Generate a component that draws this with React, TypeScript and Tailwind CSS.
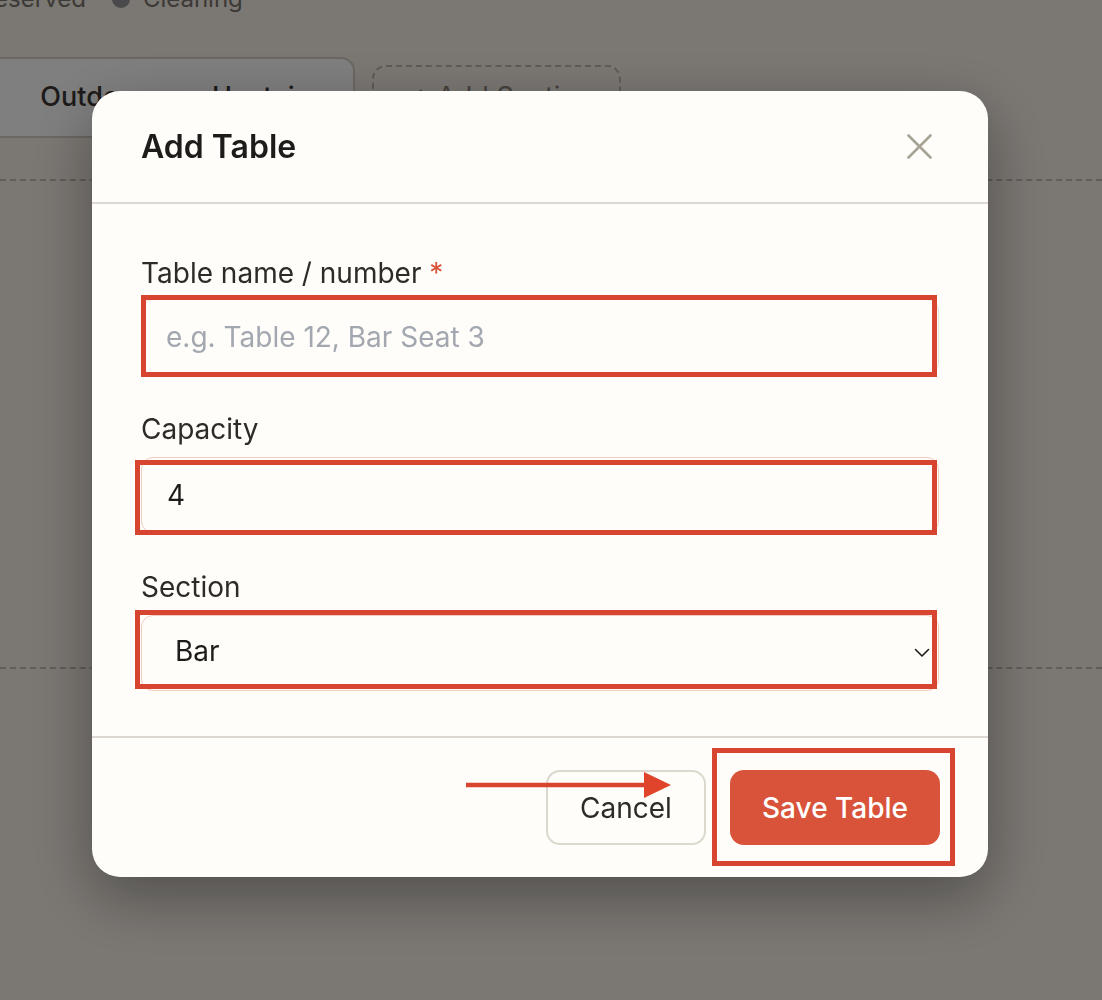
import { useState } from 'react'

function CloseIcon() {
  return (
    <svg width="25" height="25" viewBox="0 0 25 25" fill="none" stroke="#a7a397" strokeWidth="2.6" strokeLinecap="round">
      <path d="M1.5 1.5 L23.5 23.5 M23.5 1.5 L1.5 23.5" />
    </svg>
  )
}

function Chevron() {
  return (
    <svg width="16" height="10" viewBox="0 0 16 10" fill="none" stroke="#1d1c1a" strokeWidth="1.6" strokeLinecap="round" strokeLinejoin="round">
      <path d="M1.5 1.5 L8 8 L14.5 1.5" />
    </svg>
  )
}

export default function App() {
  const [name, setName] = useState('')
  const [capacity, setCapacity] = useState('4')
  const [section, setSection] = useState('Bar')

  return (
    <div className="relative min-h-screen overflow-hidden bg-[#f6efe7] font-['Inter',sans-serif]">
      {/* Page behind the dialog */}
      <div className="-mt-[19px] ml-[-52px] flex h-[36px] items-center text-[24px] text-[#78736d]">
        <span className="h-[18px] w-[18px] rounded-full bg-[#d9533a]" />
        <span className="ml-[13px]">Reserved</span>
        <span className="ml-[26px] h-[18px] w-[18px] rounded-full bg-[#94949a]" />
        <span className="ml-[13px]">Cleaning</span>
      </div>

      <div className="mt-[40px] flex items-center gap-[17px]">
        <div className="ml-[-144px] flex h-[81px] items-center rounded-[14px] border-2 border-[#d6cfc4] bg-white text-[27px] font-medium text-[#3a3733]">
          <span className="px-[33px]">Indoor</span>
          <span className="px-[33px]">Outdoor</span>
          <span className="px-[33px]">Upstairs</span>
        </div>
        <div className="flex h-[65px] w-[249px] items-center whitespace-nowrap rounded-[14px] border-2 border-dashed border-[#bdb6ab] px-[38px] text-[27px] text-[#8a847c]">
          + Add Section
        </div>
      </div>

      <div className="mt-[41px] h-[490px] border-y-2 border-dashed border-[#c2bbb1]" />

      {/* Overlay */}
      <div className="fixed inset-0 flex items-start bg-black/50 pl-[92px] pt-[91px]">
        <div className="flex h-[786px] w-[896px] flex-col rounded-[28px] bg-[#fffdf9] shadow-[0_20px_60px_rgba(0,0,0,0.35)]">
          {/* Header */}
          <div className="flex h-[113px] items-center justify-between border-b-2 border-[#dcd8d0] pl-[49px] pr-[56px]">
            <h2 className="text-[32px] font-semibold leading-9 text-[#1d1c1a]">Add Table</h2>
            <button className="flex items-center justify-center">
              <CloseIcon />
            </button>
          </div>

          {/* Body */}
          <div className="flex flex-1 flex-col gap-[36px] px-[49px] pt-[51px] text-[#2d2b28]">
            <div className="flex flex-col gap-[8px]">
              <label className="text-[28px] leading-9">
                Table name / number <span className="text-[#d9533a]">*</span>
              </label>
              <div className="relative">
                <input
                  value={name}
                  onChange={e => setName(e.target.value)}
                  placeholder="e.g. Table 12, Bar Seat 3"
                  className="h-[76px] w-full rounded-[12px] border border-[#e6e1d8] bg-[#fffdf9] px-[24px] text-[28px] text-[#1d1c1a] outline-none placeholder:text-[#a3a8b0]"
                />
                <div className="pointer-events-none absolute -top-[4px] -bottom-[2px] left-0 right-[2px] border-[5px] border-[#d7442f]" />
              </div>
            </div>

            <div className="flex flex-col gap-[10px]">
              <label className="text-[28px] leading-9">Capacity</label>
              <div className="relative">
                <input
                  value={capacity}
                  onChange={e => setCapacity(e.target.value)}
                  className="h-[76px] w-full rounded-[12px] border border-[#f0cbbf] bg-[#fffdf9] px-[25px] text-[28px] text-[#1d1c1a] outline-none"
                />
                <div className="pointer-events-none absolute top-[3px] -bottom-[2px] -left-[6px] right-[2px] border-[5px] border-[#d7442f]" />
              </div>
            </div>

            <div className="flex flex-col gap-[10px]">
              <label className="text-[28px] leading-9">Section</label>
              <div className="relative">
                <select
                  value={section}
                  onChange={e => setSection(e.target.value)}
                  className="h-[76px] w-full appearance-none rounded-[12px] border border-[#f0cbbf] bg-[#fffdf9] pb-[4px] pl-[33px] text-[28px] text-[#1d1c1a] outline-none"
                >
                  <option>Bar</option>
                  <option>Indoor</option>
                  <option>Outdoor</option>
                  <option>Upstairs</option>
                </select>
                <span className="pointer-events-none absolute right-[9px] top-1/2 -translate-y-1/2">
                  <Chevron />
                </span>
                <div className="pointer-events-none absolute -top-[5px] bottom-[2px] -left-[6px] right-[2px] border-[5px] border-[#d7442f]" />
              </div>
            </div>
          </div>

          {/* Footer */}
          <div className="relative flex h-[141px] items-center justify-end gap-[24px] border-t-2 border-[#dcd8d0] pr-[48px]">
            <button className="h-[75px] w-[160px] rounded-[14px] border-2 border-[#dcd8cd] text-[28px] text-[#2d2b28]">
              Cancel
            </button>
            <div className="relative">
              <button className="h-[75px] w-[210px] rounded-[14px] bg-[#d9533a] text-[28px] font-medium text-white">
                Save Table
              </button>
              <div className="pointer-events-none absolute -top-[22px] -bottom-[21px] -left-[18px] -right-[15px] border-[5px] border-[#d7442f]" />
            </div>
            <svg
              className="pointer-events-none absolute left-[374px] top-[34px]"
              width="206"
              height="26"
              viewBox="0 0 206 26"
            >
              <path d="M0 13 H182" stroke="#d9442e" strokeWidth="4.5" />
              <path d="M178 0 L205 13 L178 26 Z" fill="#e0452c" />
            </svg>
          </div>
        </div>
      </div>
    </div>
  )
}
